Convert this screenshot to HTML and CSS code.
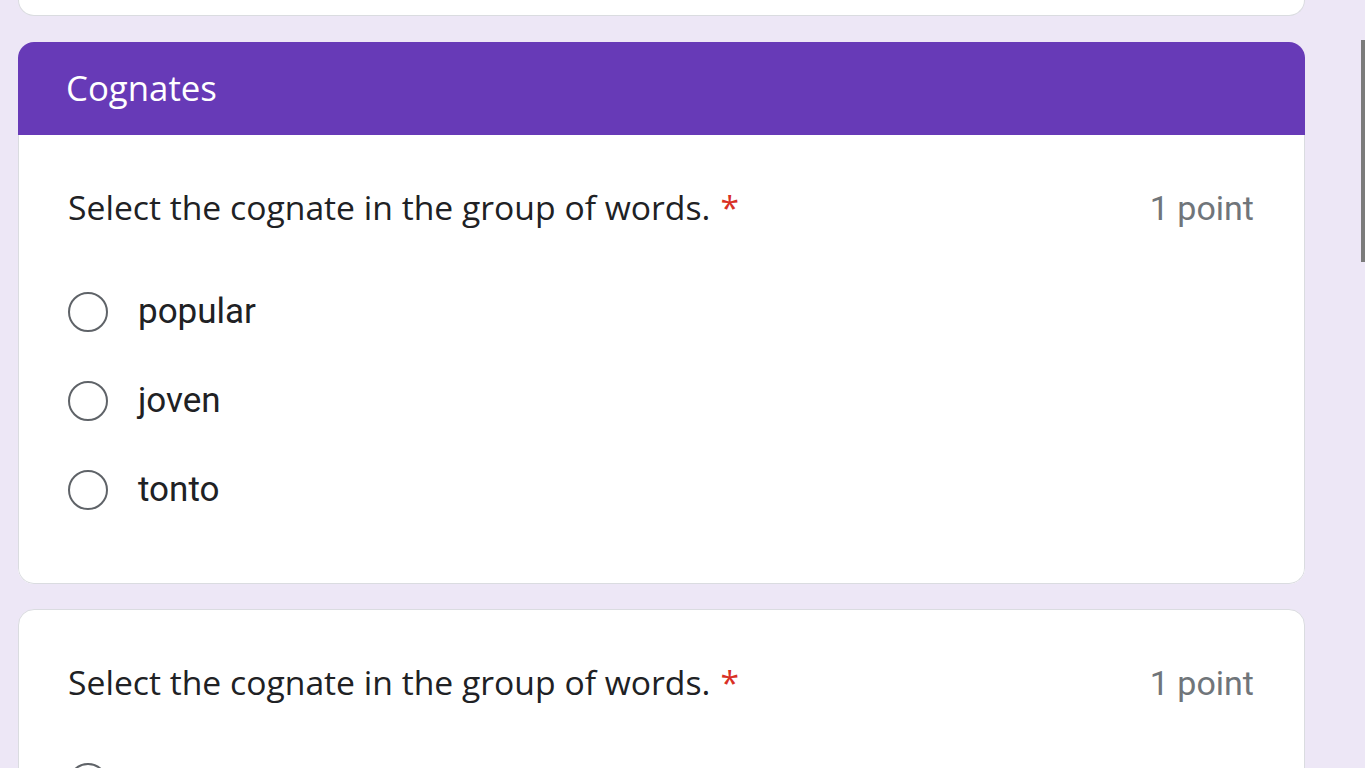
FILE: index.html
```html
<!DOCTYPE html>
<html lang="en">
<head>
<meta charset="utf-8">
<title>Cognates</title>
<link rel="stylesheet" href="styles.css">
</head>
<body>
<div class="page">
  <div class="card card-stub"></div>

  <div class="card section">
    <div class="section-head">
      <div class="section-title">Cognates</div>
    </div>
    <div class="question">
      <div class="q-row">
        <div class="q-title">Select the cognate in the group of words.<span class="req">*</span></div>
        <div class="q-points">1 point</div>
      </div>
      <div class="options">
        <label class="option"><span class="radio"></span><span class="opt-text">popular</span></label>
        <label class="option"><span class="radio"></span><span class="opt-text">joven</span></label>
        <label class="option"><span class="radio"></span><span class="opt-text">tonto</span></label>
      </div>
    </div>
  </div>

  <div class="card plain">
    <div class="question">
      <div class="q-row">
        <div class="q-title">Select the cognate in the group of words.<span class="req">*</span></div>
        <div class="q-points">1 point</div>
      </div>
      <div class="options">
        <div class="option"><span class="radio"></span></div>
      </div>
    </div>
  </div>
</div>
<div class="scroll-thumb"></div>
</body>
</html>
```
FILE: styles.css
```css
html, body {
  margin: 0;
  padding: 0;
  height: 100%;
  overflow: hidden;
}
body {
  background: #ede7f6;
  font-family: Roboto, "Liberation Sans", sans-serif;
  color: #202124;
}
.page {
  width: 1287px;
  margin-left: 18px;
  display: flex;
  flex-direction: column;
  gap: 26px;
}
.card {
  background: #fff;
  border: 1px solid #dadce0;
  border-radius: 16px;
  box-sizing: border-box;
}
.card-stub {
  height: 16px;
  border-top: none;
  border-radius: 0 0 16px 16px;
}
.section {
  border: none;
  overflow: hidden;
}
.section-head {
  background: #673ab7;
  height: 93px;
  display: flex;
  align-items: center;
  padding-left: 48px;
}
.section-title {
  color: #fff;
  font-family: "Open Sans", sans-serif;
  font-size: 34.8px;
  line-height: 44px;
  margin-top: -2px;
}
.section .question {
  border: 1px solid #dadce0;
  border-top: none;
  border-radius: 0 0 16px 16px;
  padding: 48px 50px 49px 49px;
}
.plain {
  margin-top: -1px;
}
.plain .question {
  padding: 48px 50px 49px 49px;
}
.plain .options {
  margin-top: 32px;
}
.q-row {
  display: flex;
  justify-content: space-between;
  align-items: center;
  height: 48px;
}
.q-title {
  font-family: "Open Sans", sans-serif;
  font-size: 33.7px;
  color: #202124;
}
.req {
  color: #d93025;
  margin-left: 10px;
}
.q-points {
  font-family: Roboto, sans-serif;
  font-size: 34px;
  color: #70757a;
  padding-top: 2px;
}
.options {
  display: flex;
  flex-direction: column;
  margin-top: 36px;
}
.option {
  display: flex;
  align-items: center;
  height: 89px;
  gap: 30px;
}
.radio {
  width: 40px;
  height: 40px;
  box-sizing: border-box;
  border: 2.5px solid #5f6368;
  border-radius: 50%;
  flex: none;
}
.opt-text {
  font-size: 35px;
  color: #202124;
}
.scroll-thumb {
  position: fixed;
  right: 0;
  top: 40px;
  width: 4px;
  height: 222px;
  background: #7b7b7b;
}
```
